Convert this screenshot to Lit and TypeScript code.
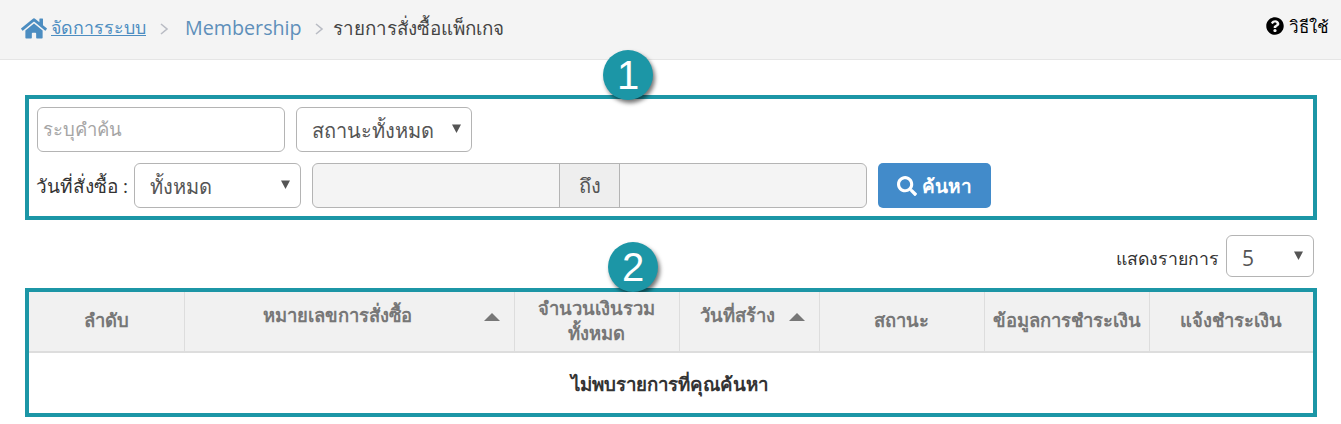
import { LitElement, html, css } from "lit";
import { customElement } from "lit/decorators.js";

const caret = html`<svg class="caret" viewBox="0 0 10 10"><path d="M0 0.5h10L5 10z"/></svg>`;
const sortUp = html`<svg class="sort" viewBox="0 0 16 8"><path d="M8 0l8 8H0z"/></svg>`;

@customElement("app-root")
export class AppRoot extends LitElement {
  static styles = css`
    :host { display: block; width: 1341px; height: 424px; overflow: hidden; background: #fff; color: #555; font-family: "Open Sans", "Noto Sans", sans-serif; font-size: 18px; }
    * { box-sizing: border-box; }
    .top { height: 60px; background: #f4f4f4; border-bottom: 1px solid #e5e5e5; display: flex; justify-content: space-between; padding: 15px 12px 0 21px; }
    .crumbs { display: flex; align-items: center; height: 26px; font-size: 19.7px; color: #5e8fba; }
    .home { width: 26px; height: 23px; fill: #4c8dc1; margin-right: 4px; }
    .crumbs a { color: #4c8dc1; text-decoration: underline; font-size: 17.8px; }
    .mem { margin-top: -2px; }
    .sep { width: 10px; height: 14px; fill: none; stroke: #b9bcc4; stroke-width: 1.6; }
    .sa { margin: 2px 16px 0 13px; }
    .sb { margin: 2px 9px 0 12px; }
    .cur { color: #444; font-size: 18.8px; }
    .help { display: flex; align-items: center; gap: 5px; height: 22px; color: #000; font-size: 17px; }
    .help svg { width: 18px; height: 18px; }
    .main { padding: 35px 24px 0 25px; }
    .box { position: relative; border: 4px solid #1c96a6; }
    .badge { position: absolute; width: 50px; height: 50px; border-radius: 50%; background: #1c96a6; color: #fff; font-family: "Liberation Sans", sans-serif; font-size: 40px; display: flex; align-items: center; justify-content: center; box-shadow: 2px 3px 4px rgba(0,0,0,.55); }
    .b1 { left: 574px; top: -49px; }
    .b2 { left: 579px; top: -50px; }
    .filter { height: 117px; padding: 8px; display: flex; flex-direction: column; gap: 11px; }
    .row { display: flex; align-items: center; }
    .field { height: 45px; border: 1px solid #b4b4b4; border-radius: 6px; background: #fff; display: flex; align-items: center; }
    .search { width: 248px; padding-left: 5px; color: #a5a5a5; font-size: 18.5px; margin-right: 11px; }
    .sel { justify-content: space-between; padding: 0 10px 0 15px; color: #555; font-size: 20px; }
    .sel span { margin-top: 3px; }
    .caret { width: 9px; height: 9px; fill: #555; margin-top: -3px; }
    .s1 { width: 176px; }
    .s2 { width: 167px; margin-right: 11px; }
    .lbl { color: #333; font-size: 19px; width: 97px; margin-left: -1px; margin-right: 1px; white-space: nowrap; }
    .range { width: 555px; height: 45px; border: 1px solid #b4b4b4; border-radius: 6px; background: #f4f4f4; display: flex; margin-right: 11px; overflow: hidden; }
    .range .a { width: 246px; }
    .range .to { width: 61px; background: #eee; border-left: 1px solid #b4b4b4; border-right: 1px solid #b4b4b4; display: flex; align-items: center; justify-content: center; font-size: 20px; }
    .btn { width: 113px; height: 45px; background: #428bca; border-radius: 5px; color: #fff; font-size: 19px; font-weight: 600; display: flex; align-items: center; justify-content: center; gap: 5px; }
    .btn svg { width: 20px; height: 20px; fill: #fff; }
    .pager { height: 68px; display: flex; justify-content: flex-end; align-items: flex-start; padding: 15px 3px 0 0; gap: 7px; color: #333; font-size: 17.7px; }
    .pager > span { margin-top: 10px; }
    .s3 { width: 88px; height: 42px; font-size: 21px; padding-right: 10px; }
    .s3 .caret { margin-top: -1px; }
    .tb { height: 129px; }
    table { border-collapse: collapse; table-layout: fixed; width: 100%; }
    th { background: #f1f1f1; height: 60px; color: #777; font-size: 18.4px; font-weight: 700; border-right: 1px solid #ddd; border-bottom: 2px solid #ddd; text-align: center; padding: 0 0 4px; line-height: 25px; position: relative; }
    th:last-child { border-right: 0; }
    th.s { padding-right: 24px; }
    th.s span { display: block; margin-top: -10px; }
    .sort { position: absolute; right: 14px; top: 21px; width: 16px; height: 8px; fill: #777; }
    td { height: 61px; text-align: center; color: #333; font-size: 18.7px; font-weight: 700; padding: 2px 4px 0 0; }
  `;

  render() {
    return html`
      <div class="top">
        <div class="crumbs">
          <svg class="home" viewBox="0 0 576 512"><path d="M280.37 148.26L96 300.11V464a16 16 0 0 0 16 16l112.06-.29a16 16 0 0 0 15.92-16V368a16 16 0 0 1 16-16h64a16 16 0 0 1 16 16v95.64a16 16 0 0 0 16 16.05L464 480a16 16 0 0 0 16-16V300L295.67 148.26a12.19 12.19 0 0 0-15.3 0zM571.6 251.47L488 182.56V44.05a12 12 0 0 0-12-12h-56a12 12 0 0 0-12 12v72.61L318.47 43a48 48 0 0 0-61 0L4.34 251.47a12 12 0 0 0-1.6 16.9l25.5 31A12 12 0 0 0 45.15 301l235.22-193.74a12.19 12.19 0 0 1 15.3 0L530.9 301a12 12 0 0 0 16.9-1.6l25.5-31a12 12 0 0 0-1.7-16.93z"/></svg>
          <a>จัดการระบบ</a>
          <svg class="sep sa" viewBox="0 0 10 14"><path d="M2 2l6 5-6 5"/></svg>
          <span class="mem">Membership</span>
          <svg class="sep sb" viewBox="0 0 10 14"><path d="M2 2l6 5-6 5"/></svg>
          <span class="cur">รายการสั่งซื้อแพ็กเกจ</span>
        </div>
        <div class="help">
          <svg viewBox="0 0 512 512"><path d="M504 256c0 136.997-111.043 248-248 248S8 392.997 8 256C8 119.083 119.043 8 256 8s248 111.083 248 248zM262.655 90c-54.497 0-89.255 22.957-116.549 63.758-3.536 5.286-2.353 12.415 2.715 16.258l34.699 26.31c5.205 3.947 12.621 3.008 16.665-2.122 17.864-22.658 30.113-35.797 57.303-35.797 20.429 0 45.698 13.148 45.698 32.958 0 14.976-12.363 22.667-32.534 33.976C247.128 238.528 216 254.941 216 296v4c0 6.627 5.373 12 12 12h56c6.627 0 12-5.373 12-12v-1.333c0-28.462 83.186-29.647 83.186-106.667 0-58.002-60.165-102-116.531-102zM256 338c-25.365 0-46 20.635-46 46 0 25.364 20.635 46 46 46s46-20.636 46-46c0-25.365-20.635-46-46-46z"/></svg>
          <span>วิธีใช้</span>
        </div>
      </div>
      <div class="main">
        <div class="box">
          <div class="badge b1">1</div>
          <div class="filter">
            <div class="row">
              <div class="field search">ระบุคำค้น</div>
              <div class="field sel s1"><span>สถานะทั้งหมด</span>${caret}</div>
            </div>
            <div class="row">
              <span class="lbl">วันที่สั่งซื้อ :</span>
              <div class="field sel s2"><span>ทั้งหมด</span>${caret}</div>
              <div class="range"><div class="a"></div><div class="to">ถึง</div></div>
              <div class="btn">
                <svg viewBox="0 0 512 512"><path d="M505 442.7L405.3 343c-4.5-4.5-10.6-7-17-7H372c27.6-35.3 44-79.7 44-128C416 93.1 322.9 0 208 0S0 93.1 0 208s93.1 208 208 208c48.3 0 92.7-16.4 128-44v16.3c0 6.4 2.5 12.5 7 17l99.7 99.7c9.4 9.4 24.6 9.4 33.9 0l28.3-28.3c9.4-9.4 9.4-24.6.1-34zM208 336c-70.7 0-128-57.2-128-128 0-70.7 57.2-128 128-128 70.7 0 128 57.2 128 128 0 70.7-57.2 128-128 128z"/></svg>
                <span>ค้นหา</span>
              </div>
            </div>
          </div>
        </div>
        <div class="pager">
          <span>แสดงรายการ</span>
          <div class="field sel s3"><span>5</span>${caret}</div>
        </div>
        <div class="box tb">
          <div class="badge b2">2</div>
          <table>
            <colgroup>
              <col style="width:155px"/><col style="width:330px"/><col style="width:165px"/><col style="width:140px"/><col style="width:165px"/><col style="width:165px"/><col style="width:164px"/>
            </colgroup>
            <thead>
              <tr>
                <th>ลำดับ</th>
                <th class="s"><span>หมายเลขการสั่งซื้อ</span>${sortUp}</th>
                <th>จำนวนเงินรวม<br/>ทั้งหมด</th>
                <th class="s"><span>วันที่สร้าง</span>${sortUp}</th>
                <th>สถานะ</th>
                <th>ข้อมูลการชำระเงิน</th>
                <th>แจ้งชำระเงิน</th>
              </tr>
            </thead>
            <tbody><tr><td colspan="7">ไม่พบรายการที่คุณค้นหา</td></tr></tbody>
          </table>
        </div>
      </div>
    `;
  }
}
